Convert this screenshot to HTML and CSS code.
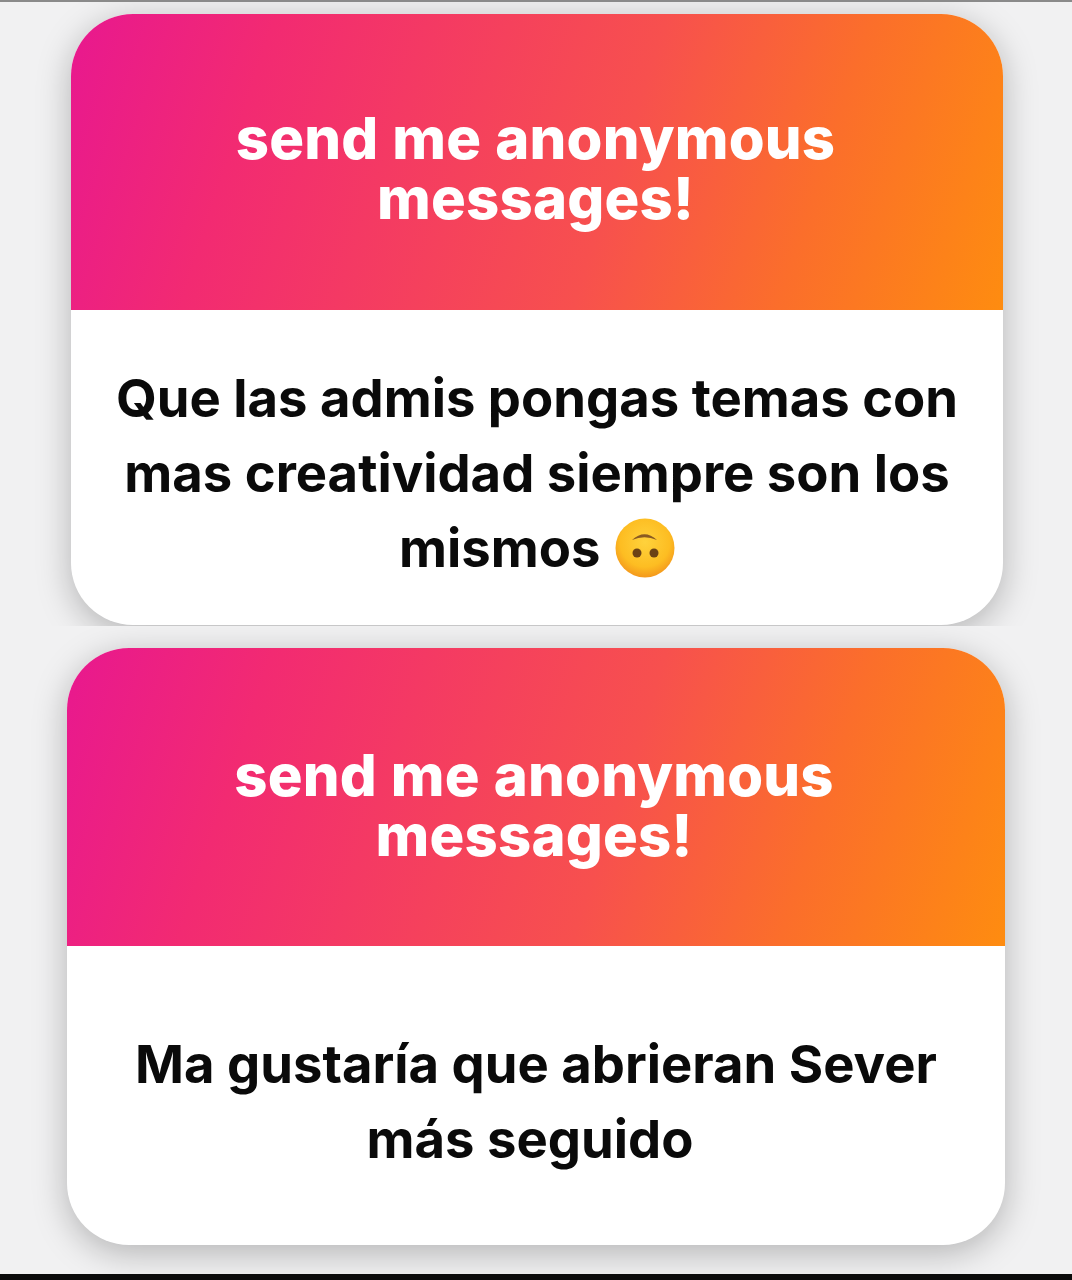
FILE: index.html
```html
<!DOCTYPE html>
<html lang="en">
<head>
    <meta charset="UTF-8">
    <meta name="viewport" content="width=device-width, initial-scale=1.0">
    <title>Anonymous messages</title>
    <link rel="stylesheet" href="styles.css">
</head>
<body>
    <div class="top-bar"></div>
    <section class="shot shot-first">
        <article class="card">
            <header class="card-head">
                <h2 class="card-title">send me anonymous<br>messages!</h2>
            </header>
            <div class="card-body">
                <p class="card-text">Que las admis pongas temas con mas creatividad siempre son los mismos
                    <svg class="emoji" viewBox="0 0 60 60" role="img" aria-label="upside-down face">
                        <defs>
                            <radialGradient id="face" cx="50%" cy="40%" r="60%">
                                <stop offset="0" stop-color="#ffd23c"/>
                                <stop offset="0.7" stop-color="#fdbd22"/>
                                <stop offset="1" stop-color="#f4981c"/>
                            </radialGradient>
                        </defs>
                        <circle cx="30" cy="30" r="29.5" fill="url(#face)"/>
                        <path d="M17 22 Q29.500 10.500 42 22 Q29.500 16.500 17 22Z" fill="#8a5a22"/>
                        <circle cx="22" cy="35" r="4.500" fill="#6b4115"/>
                        <circle cx="39" cy="35" r="4.500" fill="#6b4115"/>
                    </svg>
                </p>
            </div>
        </article>
    </section>
    <section class="shot shot-second">
        <article class="card">
            <header class="card-head">
                <h2 class="card-title">send me anonymous<br>messages!</h2>
            </header>
            <div class="card-body">
                <p class="card-text">Ma gustaría que abrieran Sever <span class="line-nudge">más seguido</span></p>
            </div>
        </article>
    </section>
    <div class="bottom-bar"></div>
</body>
</html>
```

FILE: styles.css
```css
* {
    box-sizing: border-box;
}

body {
    margin: 0;
    background-color: #f1f1f2;
    font-family: Inter, "Liberation Sans", sans-serif;
}

.top-bar {
    height: 2px;
    background-color: #8a8a8a;
}

.shot {
    overflow: hidden;
}

.shot-first {
    height: 624px;
    padding: 12px 69px 0 71px;
}

.shot-second {
    height: 648px;
    padding: 22px 67px 0 67px;
}

.card {
    border-radius: 62px;
    overflow: hidden;
    background: #fff;
    box-shadow: 0 8px 34px rgba(0, 0, 0, 0.26);
}

.shot-first .card {
    height: 611px;
}

.shot-second .card {
    height: 597px;
}

.card-head {
    display: flex;
    align-items: center;
    justify-content: center;
    background: linear-gradient(108deg, #e8188f 0%, #f22a72 20%, #f7504e 58%, #fb6e2b 78%, #fe8c10 100%);
}

.shot-first .card-head {
    height: 296px;
    padding: 20px 3px 8px 0;
}

.shot-second .card-head {
    height: 298px;
    padding: 19px 4px 4px 0;
}

.card-title {
    margin: 0;
    color: #fff;
    font-size: 58px;
    font-weight: 800;
    line-height: 60px;
    letter-spacing: 0.2px;
    word-spacing: 1px;
    text-align: center;
}

.card-body {
    display: flex;
    align-items: center;
    justify-content: center;
    padding: 0 40px;
}

.shot-first .card-body {
    height: 315px;
    padding-top: 11px;
}

.shot-second .card-body {
    height: 299px;
    padding: 12px 60px 0;
}

.card-text {
    margin: 0;
    color: #0a0a0a;
    font-size: 52.6px;
    font-weight: 700;
    line-height: 75px;
    text-align: center;
}

.line-nudge {
    display: inline-block;
    margin-right: 12px;
}

.emoji {
    width: 60px;
    height: 60px;
    vertical-align: -11px;
    margin-left: 2px;
}

.bottom-bar {
    height: 6px;
    background-color: #0b0b0b;
}
```
